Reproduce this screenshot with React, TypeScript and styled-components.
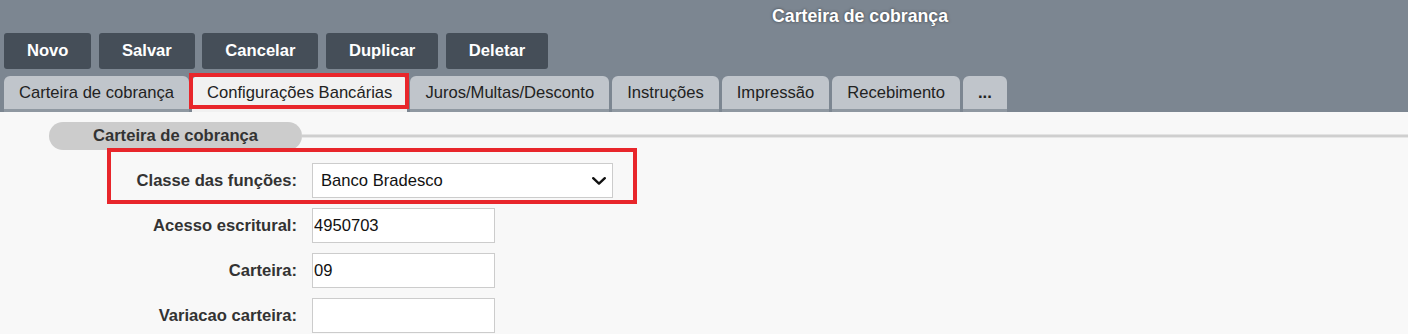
import styled, { createGlobalStyle } from "styled-components";

const GlobalStyle = createGlobalStyle`
  body {
    margin: 0;
    background: #f8f8f8;
    font-family: "Liberation Sans", Arial, sans-serif;
    font-size: 16.6px;
  }
`;

const Header = styled.div`
  background: #7c8691;
  display: flex;
  flex-direction: column;
`;

const TitleBar = styled.div`
  height: 33px;
  padding-left: 312px;
  display: flex;
  align-items: center;
  justify-content: center;
  color: #fff;
  font-weight: 700;
  font-size: 17.7px;
  text-shadow: 0 0 3px rgba(0, 0, 0, 0.55);
`;

const Toolbar = styled.div`
  display: flex;
  gap: 7.5px;
  padding-left: 4px;
`;

const ToolButton = styled.button`
  height: 36px;
  padding: 0 23px;
  border: none;
  border-radius: 3px;
  background: #454e58;
  color: #fff;
  font-family: inherit;
  font-size: 16.6px;
  font-weight: 700;
  cursor: pointer;
`;

const TabBar = styled.div`
  display: flex;
  align-items: flex-end;
  gap: 3px;
  margin-top: 7px;
  padding-left: 4px;
`;

const Tab = styled.div<{ $active?: boolean; $bold?: boolean }>`
  position: relative;
  box-sizing: border-box;
  height: 36px;
  padding: 0 15px;
  display: flex;
  align-items: center;
  border-radius: 6px 6px 0 0;
  border-bottom: 3px solid ${(p) => (p.$active ? "#f1f1f1" : "#8f98a1")};
  background: ${(p) => (p.$active ? "#f1f1f1" : "#c0c5cb")};
  color: #222;
  font-weight: ${(p) => (p.$bold ? 700 : 400)};
  white-space: nowrap;

  ${(p) =>
    p.$active &&
    `
    &::after {
      content: "";
      position: absolute;
      top: -3px;
      left: -3px;
      right: -2px;
      bottom: 0;
      border: 4px solid #e8262b;
    }
  `}
`;

const Content = styled.div`
  padding-top: 10px;
`;

const SectionHead = styled.div`
  display: flex;
  align-items: center;
  padding-left: 49px;
`;

const Legend = styled.div`
  width: 253px;
  height: 28px;
  border-radius: 14px;
  background: #cccccc;
  color: #333;
  font-weight: 700;
  display: flex;
  align-items: center;
  justify-content: center;
`;

const Rule = styled.div`
  flex: 1;
  height: 4px;
  background: linear-gradient(#e3e3e3 0 1px, #cfcfcf 1px 3px, #e6e6e6 3px);
`;

const Form = styled.div`
  display: flex;
  flex-direction: column;
  gap: 10px;
  margin-top: 13px;
`;

const Row = styled.div<{ $marked?: boolean }>`
  position: relative;
  display: flex;
  align-items: center;
  height: 35px;

  ${(p) =>
    p.$marked &&
    `
    &::after {
      content: "";
      position: absolute;
      left: 107px;
      top: -15px;
      width: 530px;
      height: 56px;
      box-sizing: border-box;
      border: 4px solid #e8262b;
      pointer-events: none;
    }
  `}
`;

const Label = styled.label`
  box-sizing: border-box;
  width: 312px;
  padding-right: 15px;
  text-align: right;
  color: #333;
  font-weight: 700;
`;

const Select = styled.div`
  box-sizing: border-box;
  width: 301px;
  height: 35px;
  padding: 0 6px 0 8px;
  display: flex;
  align-items: center;
  justify-content: space-between;
  background: #fff;
  border: 1px solid #cccccc;
  color: #111;
`;

const TextInput = styled.input`
  box-sizing: border-box;
  width: 183px;
  height: 35px;
  padding: 0 1px;
  background: #fff;
  border: 1px solid #cccccc;
  color: #111;
  font-family: inherit;
  font-size: 16.6px;
  outline: none;
`;

const Chevron = () => (
  <svg width="14" height="8" viewBox="0 0 14 8">
    <polyline
      points="1.2,1.2 7,6.6 12.8,1.2"
      fill="none"
      stroke="#111"
      strokeWidth="2.4"
      strokeLinecap="round"
      strokeLinejoin="round"
    />
  </svg>
);

const actions = ["Novo", "Salvar", "Cancelar", "Duplicar", "Deletar"];
const tabs = [
  "Carteira de cobrança",
  "Configurações Bancárias",
  "Juros/Multas/Desconto",
  "Instruções",
  "Impressão",
  "Recebimento",
];

const fields = [
  { label: "Acesso escritural:", value: "4950703" },
  { label: "Carteira:", value: "09" },
  { label: "Variacao carteira:", value: "" },
];

const App = () => {
  return (
    <>
      <GlobalStyle />
      <Header>
        <TitleBar>Carteira de cobrança</TitleBar>
        <Toolbar>
          {actions.map((a) => (
            <ToolButton key={a}>{a}</ToolButton>
          ))}
        </Toolbar>
        <TabBar>
          {tabs.map((t) => (
            <Tab key={t} $active={t === "Configurações Bancárias"}>
              {t}
            </Tab>
          ))}
          <Tab $bold>...</Tab>
        </TabBar>
      </Header>

      <Content>
        <SectionHead>
          <Legend>Carteira de cobrança</Legend>
          <Rule />
        </SectionHead>

        <Form>
          <Row $marked>
            <Label>Classe das funções:</Label>
            <Select>
              <span>Banco Bradesco</span>
              <Chevron />
            </Select>
          </Row>
          {fields.map((f) => (
            <Row key={f.label}>
              <Label>{f.label}</Label>
              <TextInput defaultValue={f.value} />
            </Row>
          ))}
        </Form>
      </Content>
    </>
  );
};

export default App;
